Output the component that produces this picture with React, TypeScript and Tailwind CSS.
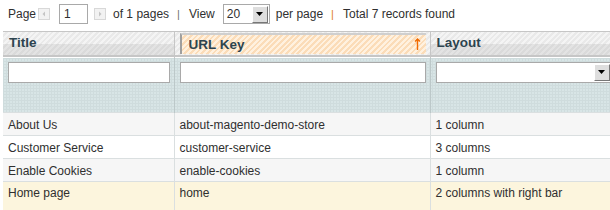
import React from 'react';

const rows = [
  { title: 'About Us', key: 'about-magento-demo-store', layout: '1 column', bg: 'bg-[#f6f6f6]' },
  { title: 'Customer Service', key: 'customer-service', layout: '3 columns', bg: 'bg-white' },
  { title: 'Enable Cookies', key: 'enable-cookies', layout: '1 column', bg: 'bg-[#f6f6f6]' },
  { title: 'Home page', key: 'home', layout: '2 columns with right bar', bg: 'bg-[#fcf5dd]' },
];

function PagerArrow({ dir }: { dir: 'left' | 'right' }) {
  return (
    <span className="flex h-[12px] w-[12px] items-center justify-center border border-[#d8d8d8] bg-[#f2f2f2]">
      <svg width="6" height="6" viewBox="0 0 6 6">
        {dir === 'left' ? (
          <polygon points="4,0.5 4,5.5 1.5,3" fill="#c4c4c4" />
        ) : (
          <polygon points="2,0.5 2,5.5 4.5,3" fill="#c4c4c4" />
        )}
      </svg>
    </span>
  );
}

function DropButton() {
  return (
    <span className="flex h-[17px] w-[16px] items-center justify-center border-l border-t border-l-white border-t-white border-r border-b border-r-[#777] border-b-[#777] bg-[#dedede]">
      <svg width="7" height="4" viewBox="0 0 7 4">
        <polygon points="0,0 7,0 3.5,4" fill="#000" />
      </svg>
    </span>
  );
}

const headBg =
  'bg-[repeating-linear-gradient(135deg,#f4f4f4_0px,#f4f4f4_2px,#e9e9e9_2px,#e9e9e9_4px)]';
const headBgLow =
  'bg-[repeating-linear-gradient(135deg,#e3e3e3_0px,#e3e3e3_2px,#dadada_2px,#dadada_4px)]';
const sortBg =
  'bg-[repeating-linear-gradient(135deg,#fff1df_0px,#fff1df_2px,#fbdcb8_2px,#fbdcb8_4px)]';
const filterBg =
  'bg-[#d8e5e6] bg-[linear-gradient(#cfdcdd_1px,transparent_1px),linear-gradient(90deg,#cfdcdd_1px,transparent_1px)] bg-[size:3px_3px]';

export default function App() {
  return (
    <div className="h-[210px] w-[610px] overflow-hidden bg-white font-[Liberation_Sans,Arial,sans-serif] text-[12px] text-[#2f2f2f]">
      <div className="flex h-[31px] items-center pl-[8px] pb-[3px] text-[12px]">
        <span>Page</span>
        <span className="ml-[2px]">
          <PagerArrow dir="left" />
        </span>
        <span className="ml-[9px] flex h-[20px] w-[29px] items-center border border-[#a9a9a9] pl-[4px]">1</span>
        <span className="ml-[6px]">
          <PagerArrow dir="right" />
        </span>
        <span className="ml-[7px]">of 1 pages</span>
        <span className="ml-[8px] text-[11px] text-[#6f6f6f]">|</span>
        <span className="ml-[9px]">View</span>
        <span className="ml-[8px] flex h-[20px] w-[47px] items-center justify-between border border-[#a9a9a9] pl-[3px] pr-[1px]">
          <span>20</span>
          <DropButton />
        </span>
        <span className="ml-[6px]">per page</span>
        <span className="ml-[8px] text-[11px] text-[#e07b25]">|</span>
        <span className="ml-[9px]">Total 7 records found</span>
      </div>

      <table className="ml-[3px] w-[617px] table-fixed border-collapse">
        <colgroup>
          <col className="w-[171px]" />
          <col className="w-[256px]" />
          <col className="w-[190px]" />
        </colgroup>
        <thead>
          <tr className="h-[26px] border-t border-[#c6c6c6]">
            <th className="border-r border-[#c6c6c6] p-0 text-left">
              <div className="flex h-[25px] flex-col border-b-2 border-b-[#c6c6c6]">
                <div className={`h-[12px] ${headBg}`} />
                <div className={`h-[11px] ${headBgLow}`} />
                <span className="-mt-[20px] pl-[6px] text-[13.5px] font-bold leading-[16px] text-[#2d444f]">Title</span>
              </div>
            </th>
            <th className="border-r border-[#c6c6c6] p-0 text-left">
              <div className={`flex h-[25px] items-end border-b-2 border-b-[#c6c6c6] ${headBg}`}>
                <div className={`ml-[5px] mr-[4px] mb-[1px] flex h-[21px] w-full items-center justify-between border-l-2 border-t-2 border-l-[#9f9f9f] border-t-[#cfcfcf] pl-[7px] pr-[5px] ${sortBg}`}>
                  <span className="text-[13.5px] font-bold text-[#2d444f]">URL Key</span>
                  <svg width="7" height="13" viewBox="0 0 7 13">
                    <path d="M3.5 1 L3.5 12 M1 3.5 L3.5 1 L6 3.5" stroke="#f26a00" strokeWidth="1.4" fill="none" />
                  </svg>
                </div>
              </div>
            </th>
            <th className="p-0 text-left">
              <div className="flex h-[25px] flex-col border-b-2 border-b-[#c6c6c6]">
                <div className={`h-[12px] ${headBg}`} />
                <div className={`h-[11px] ${headBgLow}`} />
                <span className="-mt-[20px] pl-[6px] text-[13.5px] font-bold leading-[16px] text-[#2d444f]">Layout</span>
              </div>
            </th>
          </tr>
          <tr className={`h-[55px] ${filterBg}`}>
            <th className="border-r border-[#bcc8c9] pl-[5px] pr-[4px] pt-[4px] align-top">
              <div className="h-[21px] w-full border border-[#a9a9a9] bg-white" />
            </th>
            <th className="border-r border-[#bcc8c9] pl-[5px] pr-[4px] pt-[4px] align-top">
              <div className="h-[21px] w-full border border-[#a9a9a9] bg-white" />
            </th>
            <th className="pl-[5px] pr-[4px] pt-[4px] align-top">
              <div className="flex h-[21px] w-[176px] items-center justify-end border border-[#a9a9a9] bg-white pr-[1px]">
                <DropButton />
              </div>
            </th>
          </tr>
        </thead>
        <tbody>
          {rows.map((r, i) => (
            <tr
              key={r.title}
              className={`${i === rows.length - 1 ? 'h-[28px] align-top' : 'h-[23px]'} border-t border-[#dadfe0] ${r.bg}`}
            >
              <td className="border-r border-[#dadfe0] px-[5px] pt-[2px] text-[12px] leading-[18px]">{r.title}</td>
              <td className="border-r border-[#dadfe0] px-[5px] pt-[2px] text-[12px] leading-[18px]">{r.key}</td>
              <td className="px-[5px] pt-[2px] text-[12px] leading-[18px]">{r.layout}</td>
            </tr>
          ))}
        </tbody>
      </table>
    </div>
  );
}
